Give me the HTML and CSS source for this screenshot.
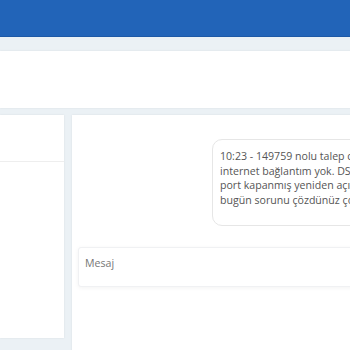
FILE: index.html
```html
<!DOCTYPE html>
<html lang="tr">
<head>
  <meta charset="UTF-8" />
  <meta name="viewport" content="width=device-width, initial-scale=1.0" />
  <title>Destek Talepleri</title>
  <link rel="stylesheet" href="styles.css">
</head>
<body>
  <div class="page">
    <header class="topbar"></header>

    <div class="content">
      <div class="card toolbar"></div>

      <div class="chat-row">
        <div class="card list">
          <div class="list-head"></div>
        </div>

        <div class="card chat">
          <div class="messages">
            <div class="bubble">10:23 - 149759 nolu talep cevaplandı mı?
internet bağlantım yok. DSL hattında
port kapanmış yeniden açılması lazım,
bugün sorunu çözdünüz çok teşekkürler.</div>
          </div>
          <textarea class="message-input" placeholder="Mesaj"></textarea>
        </div>
      </div>
    </div>
  </div>
</body>
</html>
```

FILE: styles.css
```css
body {
  margin: 0;
  font-family: 'Open Sans', 'Noto Sans', sans-serif;
  background-color: #ebf1f5;
  color: #555;
  overflow: hidden;
}
.page {
  width: 500px;
}
.topbar {
  height: 36px;
  background-color: #2264b8;
  border-bottom: 1px solid #1d59a6;
}
.content {
  padding-top: 14px;
}
.card {
  background: white;
  box-shadow: 0 0 2px rgba(0,0,0,0.08);
}
.toolbar {
  height: 57px;
  margin-bottom: 7px;
}
.chat-row {
  display: grid;
  grid-template-columns: 64px 1fr;
  gap: 8px;
  align-items: start;
}
.list {
  height: 223px;
}
.list-head {
  height: 46px;
  border-bottom: 1px solid #eeeeee;
}
.chat {
  height: 260px;
  padding: 24px 6px 0;
}
.messages {
  display: flex;
  justify-content: flex-start;
  margin-bottom: 21px;
}
.bubble {
  width: 250px;
  margin-left: 134px;
  padding: 9px 7px 18px;
  border: 1px solid #e6e6e6;
  border-radius: 10px;
  font-size: 10.6px;
  line-height: 14.5px;
  white-space: pre-line;
  color: #555;
}
.message-input {
  display: block;
  box-sizing: border-box;
  width: 100%;
  height: 40px;
  padding: 8px 6px;
  border: 1px solid #f0f1f3;
  border-radius: 3px;
  box-shadow: 0 1px 4px rgba(0,0,0,0.05);
  font-family: inherit;
  font-size: 10.6px;
  resize: none;
  outline: none;
}
.message-input::placeholder {
  color: #777;
}
```
